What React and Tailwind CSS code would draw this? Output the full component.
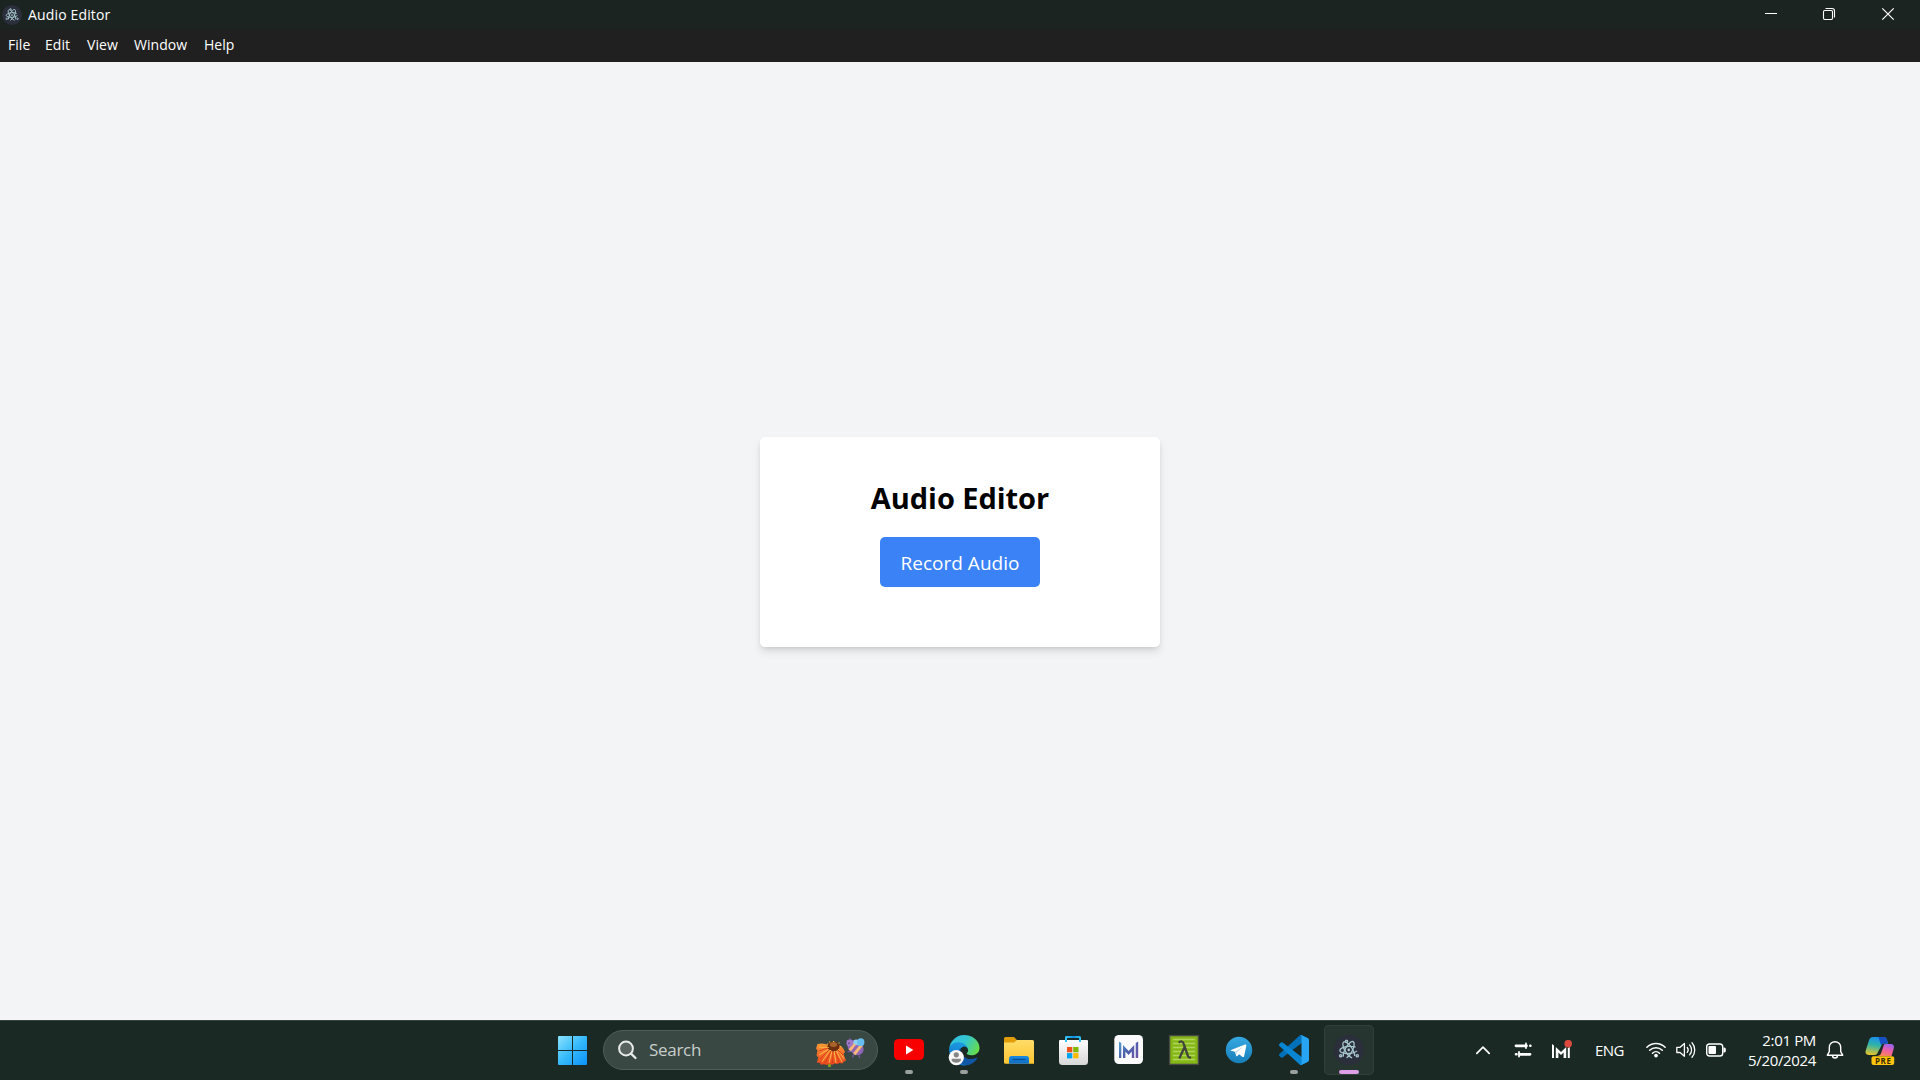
import React from "react";

const MENU = [
  { label: "File", cls: "w-[37px]" },
  { label: "Edit", cls: "w-[42px]" },
  { label: "View", cls: "w-[47px]" },
  { label: "Window", cls: "w-[70px]" },
  { label: "Help", cls: "w-[40px]" },
];

function Atom({ className, ...rest }) {
  return (
    <svg className={className} viewBox="0 0 24 24" fill="none" stroke="#a6c6ce" strokeWidth="1.500" {...rest}>
      <ellipse cx="12" cy="12" rx="10" ry="4" transform="rotate(-4 12 12)" strokeDasharray="40 5.500" strokeDashoffset="-2" />
      <ellipse cx="12" cy="12" rx="10.500" ry="4" transform="rotate(57 12 12)" strokeDasharray="43 5" strokeDashoffset="-2" />
      <ellipse cx="12" cy="12" rx="10.500" ry="4" transform="rotate(-62 12 12)" strokeDasharray="43 5" strokeDashoffset="-26" />
      <circle cx="12" cy="12" r="1.500" fill="#a6c6ce" stroke="none" />
      <circle cx="9.500" cy="2.300" r="1.300" />
      <circle cx="3" cy="18.500" r="1.300" />
      <circle cx="21.500" cy="18.500" r="1.300" />
    </svg>
  );
}

function TitleBar() {
  return (
    <header className="flex h-[29px] shrink-0 items-center bg-[#1c2421]">
      <div className="ml-[2px] flex size-5 items-center justify-center rounded-full bg-[#2b2e3b]">
        <Atom className="size-[14px]" />
      </div>
      <span className="ml-[6px] text-[14px] leading-[20px] tracking-[0.15px] text-white">Audio Editor</span>
      <div className="ml-auto flex">
        <svg className="h-[29px] w-[58px]" viewBox="0 0 58 29" fill="none" stroke="#fff">
          <path d="M22 13.500h12" />
        </svg>
        <svg className="h-[29px] w-[58px]" viewBox="0 0 58 29" fill="none" stroke="#fff" strokeWidth="1.100">
          <rect x="22.500" y="10.500" width="9" height="9" rx="1.200" />
          <path d="M24.500 8.500h6.500a2.500 2.500 0 0 1 2.500 2.500v6.500" />
        </svg>
        <svg className="h-[29px] w-[61px]" viewBox="0 0 61 29" fill="none" stroke="#fff" strokeWidth="1.200">
          <path d="M23.300 8.300l11.400 11.400M34.700 8.300L23.300 19.700" />
        </svg>
      </div>
    </header>
  );
}

function MenuBar() {
  return (
    <nav className="flex h-[33px] shrink-0 items-center bg-[#202020] pb-[2px] pl-[8px] text-[14px] leading-5 tracking-[0.05px] text-white">
      {MENU.map((m) => (
        <span key={m.label} className={m.cls}>{m.label}</span>
      ))}
    </nav>
  );
}

function Cell({ children, active, running }) {
  return (
    <div className={active ? "size-[50px] rounded-[5px] bg-[#26352f] inset-ring inset-ring-[#31403a]" : "size-[50px]"}>
      <svg className="size-[50px]" viewBox="0 0 50 50">
        {children}
        {running && <rect x="21" y="45" width="8" height="4" rx="2" fill="#9aa09d" />}
        {active && <rect x="15" y="45" width="20" height="4" rx="2" fill="#dd9fe6" />}
      </svg>
    </div>
  );
}

function StartIcon() {
  return (
    <Cell>
      <defs>
        <linearGradient id="win" gradientUnits="userSpaceOnUse" x1="11" y1="11" x2="40" y2="40">
          <stop offset="0" stopColor="#8be3fe" />
          <stop offset=".5" stopColor="#35b9fb" />
          <stop offset="1" stopColor="#0a91f8" />
        </linearGradient>
      </defs>
      <path fill="url(#win)" d="M12 11h13v14H11V12a1 1 0 0 1 1-1zM26 11h13a1 1 0 0 1 1 1v13H26zM11 26h14v14H12a1 1 0 0 1-1-1zM26 26h14v13a1 1 0 0 1-1 1H26z" />
    </Cell>
  );
}

function FlowerAndBee() {
  return (
    <svg className="mr-[12px] h-[32px] w-[49px]" viewBox="0 0 49 32">
      <defs>
        <linearGradient id="petal" x1="0" y1="0" x2="0" y2="1">
          <stop stopColor="#f79a35" />
          <stop offset=".45" stopColor="#f4712a" />
          <stop offset="1" stopColor="#e8441c" />
        </linearGradient>
      </defs>
      <path d="M13.500 26v5" stroke="#7da51e" strokeWidth="2.800" />
      <path d="M1.500 8Q7 6.500 13 9h9q5 1 7 7l-1.500 2 2.500 6.500-2.500 1.500-1 1.500-3-.5-2 1-3-.5-2 1.200-3.500-.7-2 1-3-.8-3 .6-1-1.800-3.200-.5 1.500-5-1.800-2 1-5-1.500-2z" fill="url(#petal)" />
      <path d="M13 12L3 11M13 13L3 19M14 14L6 26M16 15l-3 12M18 15l2 12M20 14l6 12M22 13l6 10" stroke="#fdb54a" strokeWidth="1" />
      <path d="M12 12L3 15M13 14L4 23M15 15L9 27M17 15l-.5 12M19 15l4 11M21 13l6 6" stroke="#d9381a" strokeWidth=".9" />
      <ellipse cx="17.500" cy="10.500" rx="6" ry="5" fill="#6d2f10" />
      <ellipse cx="17.500" cy="8.500" rx="3.600" ry="2.500" fill="#a8652b" />
      <path d="M11 8h1.200M11.500 11.500h1.200M14 14.500h1.200M18 15.500h1.200M22 13.500h1.200M24 10.500h1.200M22.500 7h1.200M13 6h1.200M17 5.500h1.200" stroke="#f0bd3f" strokeWidth="1.200" />
      <path d="M35 4l-1.500-2M33 5L30.800 4.500M35 15l-3.500.8M38 18l-1.500 3.500M43 19.500l.8 2.500" stroke="#7b54a5" strokeWidth="1.200" />
      <g transform="rotate(38 40 12)">
        <rect x="31" y="6" width="17" height="12" rx="6" fill="#8f65b8" />
        <path d="M35 6.300h3v11.400h-3zM41 6h3v12h-3z" fill="#f8b978" />
      </g>
      <circle cx="33.800" cy="7" r="3.400" fill="#9d78c6" />
      <circle cx="33" cy="7.300" r=".7" fill="#43295f" />
      <ellipse cx="41" cy="6.300" rx="3.800" ry="2.700" transform="rotate(15 41 6.300)" fill="#8fd0f4" />
      <ellipse cx="44.800" cy="6.200" rx="3.600" ry="3.900" fill="#66bdf0" />
    </svg>
  );
}

function SearchBox() {
  return (
    <div className="mx-[6px] flex h-10 w-[275px] items-center rounded-full border border-[#4f5e58] bg-[#3a4843]">
      <svg className="ml-[14px] size-5" viewBox="0 0 20 20" fill="none" stroke="#e8ebea" strokeWidth="2">
        <circle cx="8" cy="8.500" r="6.900" fill="#58635f" />
        <path d="M13 13.700l4.500 4.300" strokeLinecap="round" strokeWidth="2.300" />
      </svg>
      <span className="ml-[11px] text-[17px] leading-6 tracking-[-0.3px] text-[#c8cecb]">Search</span>
      <div className="ml-auto flex pt-[4px]"><FlowerAndBee /></div>
    </div>
  );
}

function YouTubeIcon() {
  return (
    <Cell running>
      <rect x="10" y="14" width="30" height="21" rx="4.500" fill="#f90000" />
      <path d="M22 20.600v8.800l7.300-4.400z" fill="#fff" />
    </Cell>
  );
}

function EdgeIcon() {
  return (
    <Cell running>
      <defs>
        <linearGradient id="e1" x1="0" y1=".5" x2="1" y2=".5"><stop stopColor="#0c59a4" /><stop offset="1" stopColor="#1255a8" /></linearGradient>
        <linearGradient id="e2" x1=".6" y1="0" x2=".2" y2="1"><stop stopColor="#1b9de2" /><stop offset=".6" stopColor="#1683d3" /><stop offset="1" stopColor="#0f5fc0" /></linearGradient>
        <linearGradient id="e3" x1="0" y1=".2" x2="1" y2=".6"><stop stopColor="#2fbfe6" /><stop offset=".5" stopColor="#35c7cf" /><stop offset="1" stopColor="#66dd4b" /></linearGradient>
      </defs>
      <g transform="translate(9.500 9.500) scale(.119)">
        <path fill="url(#e1)" d="M235.680 195.460a93.730 93.730 0 0 1-10.540 4.710 101.870 101.870 0 0 1-35.900 6.460c-47.320 0-88.540-32.550-88.540-74.320A31.480 31.480 0 0 1 117.130 105c-42.800 1.800-53.800 46.400-53.800 72.530 0 73.880 68.090 81.370 82.760 81.370 7.910 0 19.840-2.300 27-4.560l1.310-.44a128.340 128.340 0 0 0 66.600-52.800 4 4 0 0 0-5.320-5.640Z" />
        <path fill="url(#e2)" d="M110.340 246.340A79.200 79.200 0 0 1 87.600 225a80.720 80.720 0 0 1 29.530-120c3.120-1.470 8.450-4.130 15.540-4a32.350 32.350 0 0 1 25.690 13 31.880 31.880 0 0 1 6.360 18.660c0-.21 24.460-79.600-80-79.600-43.900 0-80 41.660-80 78.210a130.150 130.150 0 0 0 12.110 56 128 128 0 0 0 156.380 67.110 75.550 75.550 0 0 1-62.780-8z" />
        <path fill="url(#e3)" d="M156.940 153.780c-.81 1.050-3.300 2.500-3.300 5.660 0 2.610 1.700 5.120 4.720 7.230 14.380 10 41.490 8.680 41.560 8.680a59.560 59.560 0 0 0 30.270-8.350A61.380 61.380 0 0 0 260.620 114c.26-22.410-8-37.310-11.340-43.910C228.090 28.760 182.350 5 132.620 5A128 128 0 0 0 4.630 131.240c.48-36.540 36.800-66.050 80-66.050 3.500 0 23.460.34 42 10.070 16.340 8.580 24.900 18.940 30.850 29.210 6.180 10.670 7.280 24.150 7.280 29.520s-2.740 13.330-7.820 19.790z" />
      </g>
      <circle cx="17.300" cy="32.600" r="7.600" fill="#fafafa" />
      <circle cx="17.300" cy="29.800" r="2.600" fill="#858585" />
      <path d="M13.300 33.700h8a.8.8 0 0 1 .8.8c0 1.800-2 3.200-4.800 3.200s-4.800-1.400-4.800-3.200a.8.8 0 0 1 .8-.8z" fill="#858585" />
    </Cell>
  );
}

function ExplorerIcon() {
  return (
    <Cell>
      <defs>
        <linearGradient id="fold" x1="0" y1="0" x2="0" y2="1"><stop stopColor="#ffdc68" /><stop offset="1" stopColor="#fdc532" /></linearGradient>
        <linearGradient id="foldb" x1="0" y1="0" x2="0" y2="1"><stop stopColor="#1a8ae0" /><stop offset="1" stopColor="#0f6cc4" /></linearGradient>
      </defs>
      <path d="M10 13.500a1.500 1.500 0 0 1 1.500-1.500H20l3 3h6v8H10z" fill="#e19d08" />
      <path d="M10 17.500h10l3-2.500h15.500a1.500 1.500 0 0 1 1.500 1.500v22.200H11.500a1.500 1.500 0 0 1-1.500-1.500z" fill="url(#fold)" />
      <path d="M15 38.700v-5.200a2.500 2.500 0 0 1 2.500-2.500h15a2.500 2.500 0 0 1 2.500 2.500v5.200z" fill="url(#foldb)" />
      <path d="M18.500 34.500h13" stroke="#0b4d94" strokeWidth="1.300" />
    </Cell>
  );
}

function StoreIcon() {
  return (
    <Cell>
      <defs>
        <linearGradient id="bag" x1="0" y1="0" x2="0" y2="1"><stop stopColor="#fff" /><stop offset="1" stopColor="#d7d7d7" /></linearGradient>
        <linearGradient id="handle" gradientUnits="userSpaceOnUse" x1="17" y1="0" x2="32" y2="0"><stop stopColor="#35c4fa" /><stop offset=".5" stopColor="#0f8ede" /><stop offset="1" stopColor="#35c4fa" /></linearGradient>
      </defs>
      <path d="M10 16a1 1 0 0 1 1-1h27a1 1 0 0 1 1 1v20.500a3.500 3.500 0 0 1-3.500 3.500h-22a3.500 3.500 0 0 1-3.500-3.500z" fill="url(#bag)" />
      <path d="M17 17v-4.500a.6.6 0 0 1 .6-.6h12.800a.6.6 0 0 1 .6.600V17" fill="none" stroke="url(#handle)" strokeWidth="2" />
      <path fill="#f1511b" d="M18 22h5.300v5.300H18z" />
      <path fill="#80b900" d="M24.200 22h5.300v5.300h-5.300z" />
      <path fill="#00a3ee" d="M18 28.100h5.300v5.300H18z" />
      <path fill="#fdb900" d="M24.200 28.100h5.300v5.300h-5.300z" />
    </Cell>
  );
}

function MIcon() {
  return (
    <Cell>
      <defs>
        <linearGradient id="mm" gradientUnits="userSpaceOnUse" x1="15" y1="16" x2="35" y2="34"><stop stopColor="#54a5cf" /><stop offset=".45" stopColor="#4a62ae" /><stop offset="1" stopColor="#7352a3" /></linearGradient>
      </defs>
      <rect x="10.300" y="10" width="28.700" height="29" rx="4.500" fill="#fbfbfd" />
      <path fill="url(#mm)" d="M15 16.500l2.300 1.500v15H15zM31.700 18l2.500-1.500V33h-2.500zM19 20l5.600 6 5.600-6v13h-2.400v-6.500l-3.200 3.400-3.200-3.400V33H19z" />
    </Cell>
  );
}

function LambdaIcon() {
  return (
    <Cell>
      <rect x="10.600" y="10.600" width="28.800" height="28.800" fill="#84b817" stroke="#4a4a44" strokeWidth="1.400" />
      <path d="M14 14.500h22M14 18.500h22M14 22.500h22M14 26.500h22M14 30.500h22M14 34.500h22" stroke="#b3d35e" strokeWidth="1.300" />
      <path d="M19.800 17.800c1.800-2.300 4-1.600 5 1.300l4 11.600c.7 2 1.700 2.300 3 1.200M25.700 21.800L20.300 33.500" fill="none" stroke="#41443b" strokeWidth="2.300" />
    </Cell>
  );
}

function TelegramIcon() {
  return (
    <Cell>
      <defs>
        <linearGradient id="tg" x1="0" y1="0" x2="0" y2="1"><stop stopColor="#35a8e2" /><stop offset="1" stopColor="#177fba" /></linearGradient>
      </defs>
      <circle cx="25" cy="25" r="13.200" fill="url(#tg)" />
      <path d="M17 25.100l14-5.500c.8-.3 1.500.2 1.300 1.200l-2.200 10.400c-.2.900-.8 1.100-1.500.7l-3.500-2.600-1.800 1.700c-.4.400-.9.500-1.100-.2l-1.300-4-3.800-1.100c-.7-.2-.7-.500-.1-.600z" fill="#fff" />
      <path d="M21.300 26.500l7.300-4.600-6 5.600-.2 2.800z" fill="#b9d9ea" />
    </Cell>
  );
}

function VSCodeIcon() {
  const arm = "M96.461 10.796L75.857.876C73.472-.273 70.622.212 68.750 2.083L1.299 63.583c-1.815 1.654-1.813 4.511.004 6.162l5.510 5.009c1.485 1.350 3.722 1.450 5.321.237L93.361 13.370C96.086 11.303 100 13.246 100 16.667v-.24c0-2.400-1.375-4.590-3.539-5.631z";
  return (
    <Cell running>
      <g transform="translate(10 10) scale(.3)">
        <path fill="#0070b8" d={arm} />
        <path fill="#0a85d1" d={arm} transform="matrix(1 0 0 -1 0 100)" />
        <path fill="#27a5f2" d="M75.858 99.126c-2.386 1.148-5.236.662-7.108-1.210C71.056 100.223 75 98.590 75 95.328V4.672C75 1.410 71.056-.223 68.750 2.083 70.622.211 73.472-.274 75.858.874l20.601 9.907C98.623 11.822 100 14.011 100 16.413v67.174c0 2.402-1.377 4.592-3.541 5.633z" />
      </g>
    </Cell>
  );
}

function ElectronCell() {
  return (
    <Cell active>
      <circle cx="24.700" cy="25" r="15" fill="#2b2e3b" />
      <Atom x="14" y="14.200" width="21.500" height="21.500" />
    </Cell>
  );
}

function Tray() {
  return (
    <div className="ml-auto flex h-[50px] items-center text-white">
      <svg className="h-5 w-[14px]" viewBox="0 0 14 20" fill="none" stroke="#fff" strokeWidth="1.700">
        <path d="M.8 13.300L7 7.200l6.200 6.100" strokeLinecap="round" strokeLinejoin="round" />
      </svg>
      <svg className="ml-[24px] h-5 w-[18px]" viewBox="0 0 18 20" fill="none" stroke="#fff" strokeLinecap="round">
        <path d="M2 5.800h10.500M6 14.300h10" strokeWidth="2.800" />
        <path d="M16.300 5.800h.1M2 14.300h.5" strokeWidth="2.600" />
        <path d="M12 3.500v4.600M5 12v4.600" strokeWidth="1.800" />
      </svg>
      <svg className="ml-[20px] h-5 w-[21px]" viewBox="0 0 21 20" fill="#fff">
        <path d="M0 4l2 1.500V18H0zM15.800 8l2-1v11h-2zM3.800 7l5.200 5 5.200-5v11h-2.600v-5.500L9 15l-2.600-2.500V18H3.800z" />
        <circle cx="16.200" cy="3.700" r="3.800" fill="#dc4a3d" />
      </svg>
      <span className="ml-[22px] w-[31px] text-[15px] leading-5 tracking-[-0.6px]">ENG</span>
      <svg className="ml-[20px] h-5 w-[20px]" viewBox="0 0 20 20" fill="none" stroke="#fff" strokeWidth="1.500" strokeLinecap="round">
        <path d="M.9 7.300a12.800 12.800 0 0 1 18.200 0M3.700 10.300a8.900 8.900 0 0 1 12.600 0M6.500 13.200a5 5 0 0 1 7 0" />
        <circle cx="10" cy="15.600" r="1.300" fill="#fff" stroke="none" />
        <circle cx="10" cy="15.600" r="1.100" />
      </svg>
      <svg className="ml-[10px] h-5 w-[20px]" viewBox="0 0 20 20" fill="none" stroke="#fff" strokeWidth="1.300" strokeLinecap="round" strokeLinejoin="round">
        <path d="M.8 7.300h3.300l4.300-3.800v12.800l-4.300-3.800H.8z" />
        <path d="M11.200 7.400a4 4 0 0 1 0 5M13.600 4.900a7.300 7.300 0 0 1 0 10M16 2.700a11 11 0 0 1 0 14.500" />
      </svg>
      <svg className="ml-[10px] h-5 w-[20px]" viewBox="0 0 20 20">
        <rect x=".7" y="4" width="16" height="12" rx="2.800" fill="none" stroke="#fff" strokeWidth="1.400" />
        <rect x="2.500" y="6" width="7.500" height="8" rx="1" fill="#fff" />
        <path d="M17.400 7.500h.8a1.600 1.600 0 0 1 1.600 1.600v1.800a1.600 1.600 0 0 1-1.600 1.600h-.8z" fill="#fff" />
      </svg>
      <div className="ml-[15px] flex w-[75px] flex-col items-end whitespace-nowrap pb-px text-[15px] leading-5 tracking-[-0.35px]">
        <span>2:01 PM</span>
        <span>5/20/2024</span>
      </div>
      <svg className="ml-[10px] h-5 w-[18px]" viewBox="0 0 18 20" fill="none" stroke="#fff" strokeWidth="1.400" strokeLinejoin="round">
        <path d="M9 1.700a5.700 5.700 0 0 0-5.700 5.700v4.200l-2 3.600h15.400l-2-3.600V7.400A5.700 5.700 0 0 0 9 1.700z" />
        <path d="M6.500 15.500a2.500 2.500 0 0 0 5 0" />
      </svg>
      <svg className="ml-[21px] mr-[25px] h-[30px] w-[30px]" viewBox="0 0 30 30">
        <defs>
          <linearGradient id="cp1" x1=".5" y1="0" x2=".3" y2="1"><stop stopColor="#1a8ff0" /><stop offset=".45" stopColor="#2fb3a8" /><stop offset="1" stopColor="#e5c52b" /></linearGradient>
          <linearGradient id="cp2" x1=".7" y1="0" x2=".3" y2="1"><stop stopColor="#9a63f0" /><stop offset=".5" stopColor="#ee5fa5" /><stop offset="1" stopColor="#f9884f" /></linearGradient>
        </defs>
        <path d="M8 2h10.500c2 0 3 1.300 3.500 3l1 3.500h-5.500L13 17c-.8 2-1.500 3-3.500 3H4c-3 0-4-2-3.200-4.700L4 5.200C4.600 3.300 5.800 2 8 2z" fill="url(#cp1)" />
        <path d="M13.500 2h5c2 0 3 1.300 3.500 3l1 3.500h-4.500c-1.200 0-2 .7-2.400 2z" fill="#174fc4" />
        <path d="M20 9h5.500c3 0 4 2 3.200 4.700L26.500 21H12l2-.6c1.300-.4 1.800-1.300 2.200-2.500l2.300-7c.4-1.200.8-1.900 1.500-1.900z" fill="url(#cp2)" />
        <rect x="6.500" y="21.200" width="22.700" height="8.800" rx="2" fill="#fcc40c" />
        <text x="17.900" y="28.500" textAnchor="middle" fontSize="8" fontWeight="700" fill="#3a2a00" textLength="16">PRE</text>
      </svg>
    </div>
  );
}

function Taskbar() {
  return (
    <footer className="flex h-[60px] shrink-0 items-center border-t border-[#35443e] bg-[#1a2924] pb-px pl-[547px]">
      <StartIcon />
      <SearchBox />
      <div className="flex gap-[5px]">
        <YouTubeIcon />
        <EdgeIcon />
        <ExplorerIcon />
        <StoreIcon />
        <MIcon />
        <LambdaIcon />
        <TelegramIcon />
        <VSCodeIcon />
        <ElectronCell />
      </div>
      <Tray />
    </footer>
  );
}

export default function App() {
  return (
    <div className="flex h-[1080px] w-[1920px] flex-col overflow-hidden font-['Open_Sans','Noto_Sans',sans-serif]">
      <TitleBar />
      <MenuBar />
      <main className="flex flex-1 items-center justify-center bg-[#f3f4f6] pt-[2px]">
        <section className="flex h-[210px] w-[400px] flex-col items-center rounded-[5px] bg-white pt-[41px] shadow-[0_5px_8px_-1px_rgba(0,0,0,0.12),0_2px_5px_-2px_rgba(0,0,0,0.12)]">
          <h1 className="text-[29px] font-bold leading-[40px] tracking-[-0.05px] text-black">Audio Editor</h1>
          <button className="mt-[19px] h-[50px] w-[160px] rounded-[5px] bg-[#3b82f6] pt-px text-[19px] leading-[30px] text-white">Record Audio</button>
        </section>
      </main>
      <Taskbar />
    </div>
  );
}
